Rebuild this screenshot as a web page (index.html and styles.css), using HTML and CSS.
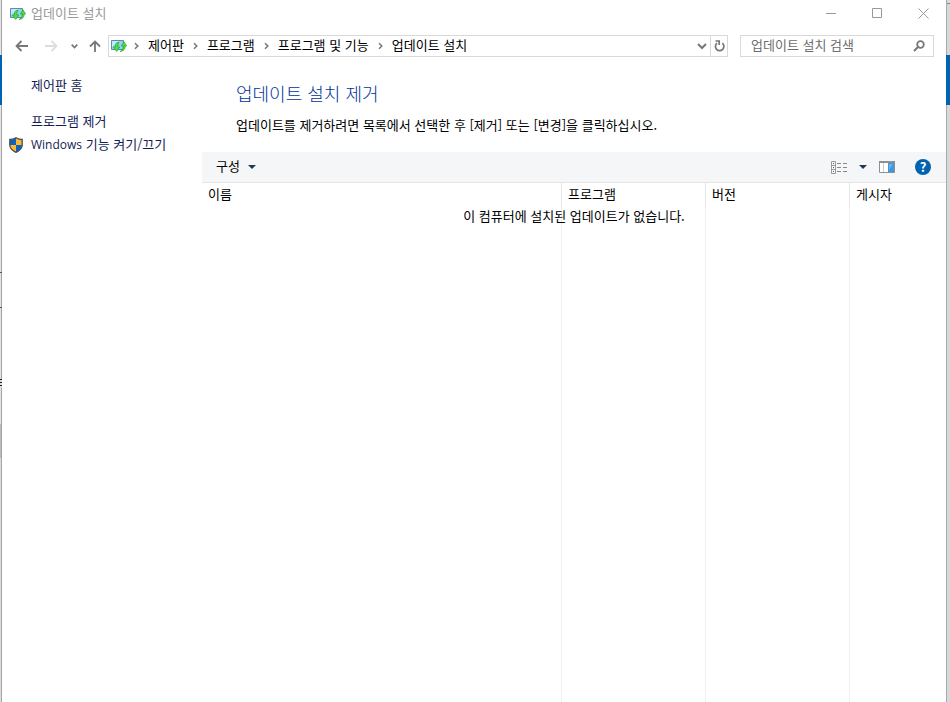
FILE: index.html
```html
<!DOCTYPE html>
<html lang="ko">
<head>
  <meta charset="UTF-8" />
  <meta name="viewport" content="width=device-width, initial-scale=1.0"/>
  <title>업데이트 설치</title>
  <link rel="stylesheet" href="styles.css">
</head>
<body>
  <svg class="defs" aria-hidden="true">
    <symbol id="updates" viewBox="0 0 16 14">
      <path d="M.5 1.5h12v9H.5z" fill="#8fd0f5" stroke="#5d8aa6"/>
      <path d="M1 2h7L1 8z" fill="#c4e8fb"/>
      <path d="M6 3.5C4.500 5 4 6.500 4.300 8H2.300l3.400 4.500L8.800 8H6.900C6.700 6.500 7 5.200 8 3.500z" fill="#4be03c" stroke="#1c9a20" stroke-width=".6"/>
      <path d="M9 12.500c2-.8 3.300-2.500 3.300-5.500h-2l2.700-4.200L15.700 7h-1.400c0 3-1.800 5.300-5.300 5.500z" fill="#4be03c" stroke="#1c9a20" stroke-width=".6"/>
    </symbol>
    <symbol id="crumb" viewBox="0 0 5 8">
      <path d="M1 1.200L3.800 4 1 6.800" fill="none" stroke="#757575" stroke-width="1.500"/>
    </symbol>
    <symbol id="caret" viewBox="0 0 8 4">
      <path d="M0 0h8L4 4z" fill="#1e395b"/>
    </symbol>
  </svg>

  <div class="backdrop backdrop-left"></div>
  <div class="window">
    <header class="titlebar">
      <svg class="app-icon"><use href="#updates"/></svg>
      <span class="title">업데이트 설치</span>
      <div class="window-buttons">
        <button aria-label="최소화"><svg width="10" height="11"><path d="M0 5.500h10"/></svg></button>
        <button aria-label="최대화"><svg width="11" height="11"><path d="M.5 .5h9v9h-9z"/></svg></button>
        <button aria-label="닫기"><svg width="11" height="11"><path d="M.5 .5l10 10M10.500 .5l-10 10"/></svg></button>
      </div>
    </header>

    <div class="navbar">
      <div class="nav-buttons">
        <button aria-label="뒤로"><svg width="13" height="12"><path d="M13 6H1.500M6.500 1L1.500 6l5 5" stroke="#777" stroke-width="1.800"/></svg></button>
        <button aria-label="앞으로" disabled><svg width="13" height="12"><path d="M0 6h11.500M6.500 1l5 5-5 5" stroke="#ddd" stroke-width="1.800"/></svg></button>
        <button class="recent" aria-label="최근 위치"><svg width="7" height="5"><path d="M.7 .7l2.800 2.800L6.300 .7" stroke="#777" stroke-width="1.700"/></svg></button>
        <button class="up" aria-label="위로"><svg width="12" height="12"><path d="M6 12V1.500M1 6.500l5-5 5 5" stroke="#777" stroke-width="1.800"/></svg></button>
      </div>
      <nav class="address" aria-label="주소">
        <svg class="app-icon"><use href="#updates"/></svg>
        <ol class="crumbs">
          <li><svg class="crumb"><use href="#crumb"/></svg><a href="#">제어판</a></li>
          <li><svg class="crumb"><use href="#crumb"/></svg><a href="#">프로그램</a></li>
          <li><svg class="crumb"><use href="#crumb"/></svg><a href="#">프로그램 및 기능</a></li>
          <li><svg class="crumb"><use href="#crumb"/></svg><a href="#">업데이트 설치</a></li>
        </ol>
        <button class="history" aria-label="이전 위치"><svg width="10" height="7"><path d="M1 1l4 4 4-4" stroke="#777" stroke-width="2"/></svg></button>
        <button class="refresh" aria-label="새로 고침"><svg width="11" height="12"><path d="M8.300 3.200A4.200 4.200 0 1 1 3 3.200" stroke="#777" stroke-width="1.700"/><path d="M1.500 1h3.700v4" stroke="#777" stroke-width="1.700"/></svg></button>
      </nav>
      <form class="search">
        <input type="text" placeholder="업데이트 설치 검색" aria-label="업데이트 설치 검색">
        <button type="button" aria-label="검색"><svg width="12" height="12"><circle cx="7.500" cy="4.500" r="3.300" stroke="#777" stroke-width="1.800"/><path d="M5 7L1 11" stroke="#777" stroke-width="2"/></svg></button>
      </form>
    </div>

    <div class="content">
      <aside class="sidebar">
        <a class="home" href="#">제어판 홈</a>
        <a href="#">프로그램 제거</a>
        <a href="#">
          <svg class="shield" viewBox="0 0 14 16">
            <path d="M7 .7C5 2 3 2.500.8 2.500V8c0 3.500 2.700 5.700 6.200 7.300C10.500 13.700 13.200 11.500 13.200 8V2.500C11 2.500 9 2 7 .7z" fill="#0b63c4"/>
            <path d="M7 .7C9 2 11 2.500 13.200 2.500V8H7zM.8 8H7v7.300C3.500 13.700.8 11.500.8 8z" fill="#fdb932"/>
            <path d="M7 .7C5 2 3 2.500.8 2.500V8c0 3.500 2.700 5.700 6.200 7.300C10.500 13.700 13.200 11.500 13.200 8V2.500C11 2.500 9 2 7 .7z" fill="none" stroke="#4a4f55" stroke-width="1.300"/>
          </svg>
          <span class="latin">Windows</span> 기능 켜기/끄기
        </a>
      </aside>

      <main class="main">
        <h1>업데이트 설치 제거</h1>
        <p class="intro">업데이트를 제거하려면 목록에서 선택한 후 [제거] 또는 [변경]을 클릭하십시오.</p>

        <div class="toolbar">
          <button class="organize"><span>구성</span> <svg class="caret"><use href="#caret"/></svg></button>
          <div class="view-tools">
            <button aria-label="보기 변경">
              <svg width="16" height="13">
                <path d="M.5 .5h4v12h-4zM.5 4.500h4M.5 8.500h4" stroke="#999"/>
                <path d="M6 2.500h4M12 2.500h4M6 6.500h4M12 6.500h4M6 10.500h4M12 10.500h4" stroke="#888"/>
                <path d="M2 2.500h1M2 10.500h1" stroke="#386ea8"/>
                <path d="M2 6.500h1" stroke="#b2503c"/>
              </svg>
            </button>
            <button class="view-menu" aria-label="추가 옵션"><svg class="caret"><use href="#caret"/></svg></button>
            <button class="preview" aria-label="미리 보기 창">
              <svg width="16" height="12">
                <path d="M.5 .5h15v11H.5z" fill="#fff" stroke="#8c9096"/>
                <path d="M0 1h16" stroke="#8c9096" stroke-width="2"/>
                <path d="M4.500 2v9" stroke="#ccc"/>
                <path d="M9 2h6v9H9z" fill="#3f96dd"/>
                <path d="M10 3h4l-4 6z" fill="#6ab2ec"/>
              </svg>
            </button>
            <button class="help" aria-label="도움말">?</button>
          </div>
        </div>

        <div class="list">
          <table>
            <thead>
              <tr>
                <th class="col-name">이름</th>
                <th class="col-info">프로그램</th>
                <th class="col-info">버전</th>
                <th>게시자</th>
              </tr>
            </thead>
            <tbody>
              <tr><td></td><td></td><td></td><td></td></tr>
            </tbody>
          </table>
          <p class="empty">이 컴퓨터에 설치된 업데이트가 없습니다.</p>
        </div>
      </main>
    </div>
  </div>
  <div class="backdrop backdrop-right"></div>
</body>
</html>
```
FILE: styles.css
```css
:root {
  --text: #000;
  --link: #151c55;
  --heading: #003399;
  --border: #d9d9d9;
  --line: #e5e5e5;
  --toolbar: #f5f6f7;
  --blue: #0063b1;
}

* {
  box-sizing: border-box;
  margin: 0;
  padding: 0;
}

body {
  display: flex;
  min-height: 100vh;
  font-family: 'Noto Sans CJK KR', sans-serif;
  font-size: 13px;
  line-height: 20px;
  color: var(--text);
  background: #fff;
}

a {
  color: inherit;
  text-decoration: none;
}

button {
  display: flex;
  align-items: center;
  justify-content: center;
  border: none;
  background: none;
  font: inherit;
  color: inherit;
}

svg {
  display: block;
  flex: none;
  fill: none;
}

.defs {
  position: absolute;
  width: 0;
  height: 0;
}

/* Strips of the desktop on both sides of the window */
.backdrop {
  flex: none;
}

.backdrop-left {
  width: 2px;
  background:
    linear-gradient(#555, #555) 0 272px / 2px 1px no-repeat,
    linear-gradient(#555, #555) 0 307px / 2px 1px no-repeat,
    repeating-linear-gradient(#222 0 1px, #ddd 1px 3px) 0 379px / 2px 9px no-repeat,
    linear-gradient(var(--blue), var(--blue)) 0 55px / 2px 50px no-repeat,
    linear-gradient(#a5a5a5, #a5a5a5) 1px 0 / 1px 100% no-repeat,
    linear-gradient(#e4e4e4 424px, #bbb 424px, #bbb 458px, #ddd 458px);
}

.backdrop-right {
  width: 4px;
  background:
    linear-gradient(var(--blue), var(--blue)) 0 55px / 4px 50px no-repeat,
    linear-gradient(#aaa, #aaa) 0 0 / 1px 100% no-repeat,
    linear-gradient(#888, #888) 0 3px / 4px 1px no-repeat,
    #d8d8d8;
}

.window {
  flex: 1;
  display: flex;
  flex-direction: column;
  min-width: 0;
  background: #fff;
}

.titlebar {
  display: flex;
  align-items: center;
  height: 27px;
  padding-left: 8px;
}

.app-icon {
  width: 16px;
  height: 14px;
}

/* labels sit slightly above the middle of their bar */
.title,
.crumbs a,
.organize span {
  padding-bottom: 2px;
}

.title {
  margin-left: 5px;
  color: #999;
}

.window-buttons {
  display: flex;
  margin-left: auto;
}

.window-buttons button {
  width: 46px;
  height: 27px;
}

.window-buttons svg {
  stroke: #999;
}

.navbar {
  display: flex;
  align-items: center;
  height: 38px;
  padding-right: 12px;
}

.nav-buttons {
  display: flex;
  width: 106px;
  padding-left: 4px;
}

.nav-buttons button {
  width: 30px;
  height: 22px;
}

.nav-buttons .recent {
  width: 16px;
}

.nav-buttons .up {
  width: 26px;
}

.address {
  flex: 1;
  display: flex;
  align-items: center;
  height: 22px;
  padding-left: 2px;
  border: 1px solid var(--border);
}

.crumbs {
  flex: 1;
  display: flex;
  list-style: none;
  white-space: nowrap;
}

.crumbs li {
  display: flex;
  align-items: center;
}

.crumb {
  width: 5px;
  height: 8px;
  margin: 0 9px;
}

.crumbs li:first-child .crumb {
  margin-left: 7px;
}

.history,
.refresh {
  width: 17px;
  height: 20px;
}

.refresh {
  border-left: 1px solid var(--border);
}

.search {
  display: flex;
  width: 194px;
  height: 22px;
  margin-left: 12px;
  border: 1px solid var(--border);
}

.search input {
  flex: 1;
  min-width: 0;
  padding: 0 0 2px 10px;
  border: none;
  outline: none;
  background: none;
  font: inherit;
}

.search input::placeholder {
  color: #6d6d6d;
}

.search button {
  width: 28px;
}

.content {
  flex: 1;
  display: flex;
}

.sidebar {
  width: 200px;
  padding-top: 10px;
  color: var(--link);
}

.sidebar a {
  display: block;
  position: relative;
  padding-left: 29px;
  margin-bottom: 3px;
}

.sidebar .home {
  margin-bottom: 16px;
}

.latin {
  font-family: 'Open Sans', sans-serif;
  font-size: 12px;
}

.shield {
  position: absolute;
  left: 7px;
  top: 3px;
  width: 14px;
  height: 16px;
}

.main {
  flex: 1;
  display: flex;
  flex-direction: column;
  min-width: 0;
}

h1 {
  padding: 15px 34px 0;
  font-size: 18px;
  font-weight: 300;
  line-height: 26px;
  color: var(--heading);
}

.intro {
  padding: 9px 34px 17px;
}

.toolbar {
  display: flex;
  align-items: center;
  justify-content: space-between;
  height: 31px;
  padding: 0 15px 0 14px;
  border-bottom: 1px solid var(--line);
  background: var(--toolbar);
}

.organize {
  gap: 8px;
}

.caret {
  width: 8px;
  height: 4px;
}

.view-tools {
  display: flex;
  align-items: center;
}

.view-menu {
  width: 32px;
  height: 20px;
}

.help {
  width: 16px;
  height: 16px;
  margin-left: 20px;
  border-radius: 50%;
  background: var(--blue);
  color: #fff;
  font-weight: 700;
}

.list {
  flex: 1;
  display: flex;
  position: relative;
}

table {
  width: 100%;
  table-layout: fixed;
  border-collapse: separate;
  border-spacing: 0;
}

th {
  height: 24px;
  padding: 0 6px 2px;
  border-right: 1px solid var(--line);
  font-weight: 400;
  text-align: left;
}

td {
  border-right: 1px solid #edeff4;
}

th:last-child,
td:last-child {
  border-right: none;
}

.col-name {
  width: 360px;
}

.col-info {
  width: 144px;
}

.empty {
  position: absolute;
  top: 23px;
  left: 0;
  right: 0;
  text-align: center;
}
```
